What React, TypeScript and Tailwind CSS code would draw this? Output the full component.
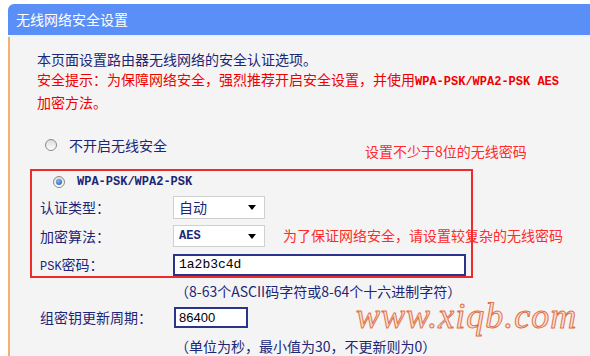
const cjk = "font-['Noto_Sans_CJK_SC',sans-serif]";
const mono = "font-['Liberation_Mono','Noto_Sans_CJK_SC',monospace]";

function Radio({ checked }: { checked?: boolean }) {
  return (
    <span className="flex h-[12px] w-[12px] items-center justify-center rounded-full border border-[#8a8a8a] bg-gradient-to-b from-[#dcdcdc] to-[#ffffff]">
      {checked && <span className="h-[6px] w-[6px] rounded-full bg-[radial-gradient(circle_at_40%_35%,#7fb8ff,#1450a8)]" />}
    </span>
  );
}

function Select({ value, mono: isMono }: { value: string; mono?: boolean }) {
  return (
    <div className="flex h-full w-[92px] items-center justify-between border border-[#d0d0d0] bg-white pl-[5px] pr-[8px]">
      <span className={isMono ? `${mono} text-[12px] font-bold` : ""}>{value}</span>
      <span className="h-0 w-0 border-x-[4px] border-t-[5px] border-x-transparent border-t-black" />
    </div>
  );
}

function Row({ label, children, h }: { label: React.ReactNode; children: React.ReactNode; h: string }) {
  return (
    <div className={`flex items-center ${h}`}>
      <div className="w-[133px]">{label}</div>
      {children}
    </div>
  );
}

export default function App() {
  return (
    <div className={`relative h-[356px] w-[590px] overflow-hidden bg-white pl-[8px] pt-[4px] ${cjk} text-[14px] text-[#1c2676]`}>
      <div className="flex h-[31px] items-center rounded-tl-[6px] bg-[#5b8ff8] pl-[8px] text-[14px] text-white">
        无线网络安全设置
      </div>
      <div className="h-[2px] bg-[#eaf2ff]" />
      <div className="h-[330px] border-l-2 border-[#f5b070] bg-[#f4f4f4] pt-[12px]">
        <div className="pl-[27px] leading-[20px]">
          <div>本页面设置路由器无线网络的安全认证选项。</div>
          <div className="text-[#f00000]">
            安全提示：为保障网络安全，强烈推荐开启安全设置，并使用<span className={`${mono} text-[12px] font-bold`}>WPA-PSK/WPA2-PSK AES</span>
          </div>
          <div className="text-[#f00000]">加密方法。</div>
        </div>

        <div className="mt-[23px] flex h-[20px] items-center pl-[35px]">
          <Radio />
          <span className="ml-[12px]">不开启无线安全</span>
        </div>

        <div className="ml-[20px] mt-[14px] h-[109px] w-[443px] border-2 border-[#ee2a2a] pl-[8px] pt-[1px]">
          <div className="flex h-[20px] items-center pl-[13px]">
            <Radio checked />
            <span className={`ml-[12px] ${mono} text-[12px] font-bold`}>WPA-PSK/WPA2-PSK</span>
          </div>
          <div className="mt-[4px]">
            <Row label="认证类型：" h="h-[23px]">
              <Select value="自动" />
            </Row>
          </div>
          <div className="mt-[6px]">
            <Row label="加密算法：" h="h-[22px]">
              <Select value="AES" mono />
            </Row>
          </div>
          <div className="mt-[7px]">
            <Row
              label={
                <span>
                  <span className={`${mono} text-[12px]`}>PSK</span>密码：
                </span>
              }
              h="h-[22px]"
            >
              <div className={`flex h-full w-[293px] items-center border-2 border-[#2a348c] bg-white pl-[4px] ${mono} text-[13px] text-black`}>
                1a2b3c4d
              </div>
            </Row>
          </div>
        </div>

        <div className="mt-[3px] pl-[165px] leading-[20px]">（8-63个ASCII码字符或8-64个十六进制字符）</div>

        <div className="mt-[6px] flex h-[21px] items-center pl-[30px]">
          <div className="w-[134px]">组密钥更新周期：</div>
          <div className="flex h-full w-[74px] items-center border-2 border-[#2a348c] bg-white pl-[3px] font-['Liberation_Sans',sans-serif] text-[13px] text-black">
            86400
          </div>
        </div>

        <div className="mt-[8px] pl-[165px] leading-[20px]">（单位为秒，最小值为30，不更新则为0）</div>
      </div>

      <div className="absolute left-[365px] top-[141px] text-[14px] text-[#ff2a2a]">设置不少于8位的无线密码</div>
      <div className="absolute left-[283px] top-[225px] text-[14px] text-[#ff2a2a]">为了保证网络安全，请设置较复杂的无线密码</div>
      <div className="pointer-events-none absolute left-[356px] top-[298px] font-['Liberation_Serif',serif] text-[36px] italic leading-none tracking-[1px] text-[#f9e0d4] [-webkit-text-stroke:1px_#e07248]">
        www.xiqb.com
      </div>
    </div>
  );
}
